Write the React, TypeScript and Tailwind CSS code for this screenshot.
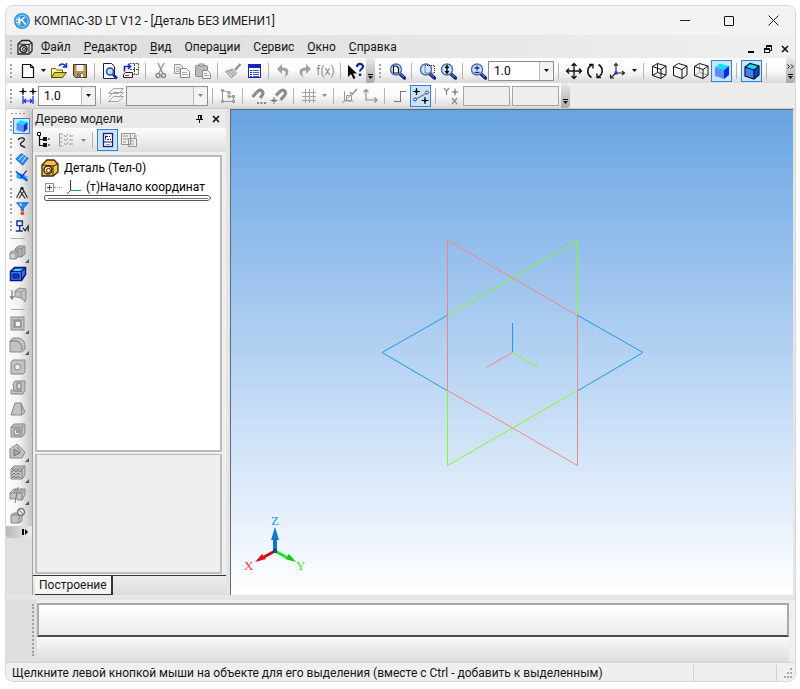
import React from 'react';
import clsx from 'clsx';

type IconProps = { children: React.ReactNode; crisp?: boolean };

const Icon = ({ children, crisp }: IconProps) => (
  <svg viewBox="0 0 18 18" className="h-[18px] w-[18px] shrink-0" fill="none" shapeRendering={crisp ? 'crispEdges' : undefined}>
    {children}
  </svg>
);

const Magnifier = ({ children }: { children?: React.ReactNode }) => (
  <Icon>
    <path d="M12 12l4.500 4" stroke="#16247e" strokeWidth="3.500" strokeLinecap="round" />
    <path d="M12 11.500l4 3.500" stroke="#6f8fe8" strokeWidth="1" />
    <circle cx="8" cy="7.500" r="5.500" fill="#cfe6fa" stroke="#4a68b8" strokeWidth="1.400" />
    {children}
  </Icon>
);

const WireCube = ({ hidden }: { hidden?: 'full' | 'thin' }) => (
  <Icon>
    {hidden && (
      <path
        d="M7.500 1.500v9l8.500 2.500M7.500 10.500l-5 3"
        stroke={hidden === 'full' ? '#222' : '#aaa'}
        strokeWidth="1"
      />
    )}
    <path d="M2.500 4.500l5-3 8.500 2.500v9l-5 3.500-8.500-3zM2.500 4.500l8.500 3 5-3.500M11 7.500v9" stroke="#111" />
  </Icon>
);

const SolidCube = ({ edges }: { edges?: boolean }) => (
  <Icon>
    <path d="M2 5l5-3.500 9 2.500-5 4z" fill="#00e5ff" />
    <path d="M2 5l9 3v9L2 14z" fill={edges ? '#3d86ea' : '#5c8cff'} />
    <path d="M11 8l5-4v9l-5 4z" fill={edges ? '#0a46c8' : '#0a2be0'} />
    {edges && <path d="M2 5l5-3.500 9 2.500v9l-5 4-9-3zM2 5l9 3 5-4M11 8v9" stroke="#0b1238" strokeWidth="1.200" />}
  </Icon>
);

const icons = {
  newDoc: (
    <Icon>
      <path d="M3.500 2.500h8l3 3v10h-11z" fill="#fff" stroke="#111" strokeWidth="1.200" />
      <path d="M11.500 2.500v3h3" stroke="#111" />
    </Icon>
  ),
  open: (
    <Icon>
      <path d="M1.500 15.500v-9h4l1 1.500h6v3" fill="#fff799" stroke="#6b6410" />
      <path d="M1.500 15.500l3-5h12l-4 5z" fill="#d9cc3c" stroke="#4f4a0a" />
      <path d="M9 4c2-3 5-2.500 6.500 0M16.500 1v4h-4" stroke="#1029d8" strokeWidth="1.500" />
    </Icon>
  ),
  save: (
    <Icon>
      <path d="M2.500 2.500h13v13h-11l-2-2z" fill="#b89652" stroke="#3a3428" />
      <path d="M5.500 3h7v6h-7z" fill="#f5f3ee" />
      <path d="M6 11.500h6.500v4H6z" fill="#777" />
      <path d="M10 12h2v3h-2z" fill="#fff" />
    </Icon>
  ),
  preview: (
    <Icon>
      <path d="M2.500 1.500h8l3 3v12h-11z" fill="#fff" stroke="#111a6e" />
      <circle cx="9" cy="9.500" r="3.500" fill="#bfe0fa" stroke="#2b4aa8" strokeWidth="1.500" />
      <path d="M12 12.500l4 4" stroke="#17257f" strokeWidth="2.500" />
    </Icon>
  ),
  layout: (
    <Icon>
      <path d="M7.500 1.500h9v11h-5M12.500 2v10M8 7.500h8" stroke="#444" strokeDasharray="2 1" />
      <path d="M1.500 12.500l2-2h7v5h-9z" fill="#fff" stroke="#222" />
      <path d="M3 13.500h4" stroke="#d02020" />
      <path d="M2.500 9.500V4.500h5M6 2l2.500 2.500L6 7" stroke="#1029d8" strokeWidth="1.600" />
    </Icon>
  ),
  cut: (
    <Icon>
      <path d="M6 1l4.500 10M12 1L7 11" stroke="#999" strokeWidth="1.500" />
      <circle cx="6" cy="13.500" r="2" stroke="#888" strokeWidth="1.400" />
      <circle cx="11.500" cy="13.500" r="2" stroke="#888" strokeWidth="1.400" />
    </Icon>
  ),
  copy: (
    <Icon>
      <path d="M1.500 2.500h6l2 2v7h-8z" fill="#eee" stroke="#999" />
      <path d="M7.500 6.500h6l3 3v6h-9z" fill="#f4f4f4" stroke="#888" />
      <path d="M3 5.500h4M3 7.500h4M3 9.500h4M9 10.500h5M9 12.500h6" stroke="#aaa" />
    </Icon>
  ),
  paste: (
    <Icon>
      <rect x="1.500" y="3.500" width="12" height="11" rx="1" fill="#bbb" stroke="#888" />
      <path d="M5 4V2h5v2z" fill="#ddd" stroke="#888" />
      <path d="M8.500 8.500h5l3 3v5h-8z" fill="#f4f4f4" stroke="#888" />
      <path d="M10 11.500h3M10 13.500h5" stroke="#aaa" />
    </Icon>
  ),
  brush: (
    <Icon>
      <path d="M16.500 2l-5.500 6" stroke="#8c8c8c" strokeWidth="2.200" />
      <path d="M1.500 9.500l7-2.500 4 4-5 5z" fill="#d4d4d4" stroke="#8c8c8c" />
      <path d="M4 9l5.500 5M6.500 8l4.500 4.500" stroke="#8c8c8c" />
    </Icon>
  ),
  props: (
    <Icon crisp>
      <rect x="3.500" y="2.500" width="12" height="13" fill="#fff" stroke="#1428b4" />
      <path d="M3 3h13v3H3z" fill="#1428b4" />
      <path d="M5 8h2M5 10h2M5 12h2M5 14h2" stroke="#1428b4" />
      <path d="M8 8h6M8 10h6M8 12h6M8 14h6" stroke="#3a56c8" />
    </Icon>
  ),
  undo: (
    <Icon>
      <path d="M7 2L2 7l5 5V8.500c4-.5 5 3 2 7 6-3 6.500-10-2-10z" fill="#a0a0a0" />
    </Icon>
  ),
  redo: (
    <Icon>
      <path d="M10 2l5 5-5 5V8.500c-4-.5-5 3-2 7-6-3-6.500-10 2-10z" fill="#a0a0a0" />
    </Icon>
  ),
  whatsThis: (
    <Icon>
      <path d="M1 3v12l3-3 2.500 5 2-1L6 11.500h4z" fill="#000" />
      <path d="M10 5c0-4 6-4 6-.5 0 2.500-3 2.500-3 5" stroke="#14268c" strokeWidth="2.200" />
      <path d="M11.800 11.500h2.500v2.500h-2.500z" fill="#14268c" />
    </Icon>
  ),
  zoomPage: (
    <Magnifier>
      <path d="M5.500 4h3l2 2v5h-5z" fill="#fff" stroke="#111" strokeWidth="1.200" />
    </Magnifier>
  ),
  zoomWindow: (
    <Magnifier>
      <path d="M7 3.500h9.500v7.500H7z" stroke="#222" strokeDasharray="1 1" />
    </Magnifier>
  ),
  zoomFit: (
    <Magnifier>
      <path d="M8 4v7" stroke="#111" strokeWidth="1.500" />
      <path d="M8 2.500l2.500 3.500h-5zM8 12.500L10.500 9h-5z" fill="#111" />
    </Magnifier>
  ),
  zoomIn: (
    <Magnifier>
      <path d="M8 3.500v5M5.500 6h5M5.500 10.500h5" stroke="#1b2d8d" strokeWidth="1.300" />
    </Magnifier>
  ),
  pan: (
    <Icon>
      <path d="M9 2v14M2 9h14M6.500 4L9 1.500 11.500 4M6.500 14L9 16.500l2.500-2.500M4 6.500L1.500 9 4 11.500M14 6.500L16.500 9 14 11.500" stroke="#111" strokeWidth="1.300" />
    </Icon>
  ),
  rotate: (
    <Icon>
      <path d="M5.500 15.500C0 12 1 5 6 3M12.500 2.500c5.500 3.500 4.500 10.500-.5 12.500" stroke="#111" strokeWidth="1.600" />
      <path d="M3 2.500h4v4M15 15.500h-4v-4" stroke="#111" strokeWidth="1.400" />
    </Icon>
  ),
  axes: (
    <Icon>
      <path d="M8 11V2M6 4l2-2.500L10 4M8 11h8M14 9l2.500 2-2.500 2M8 11l-5 4.500M2.500 12.500v3.500H6" stroke="#222" strokeWidth="1.100" />
      <path d="M6.500 9.500h3v3h-3z" fill="#1c32e8" />
    </Icon>
  ),
  step: (
    <Icon>
      <path d="M4 1v7M.5 4.500h7M14 1v7M10.500 4.500h7" stroke="#111" strokeWidth="1.100" />
      <path d="M4 2.500l2 2-2 2-2-2zM14 2.500l2 2-2 2-2-2z" fill="#111" />
      <path d="M4 9v8M14 9v8M5 14h8M7 12l-2 2 2 2M11 12l2 2-2 2" stroke="#1a30dc" strokeWidth="1.200" />
    </Icon>
  ),
  layers: (
    <Icon>
      <path d="M1.500 14.500l5-5h10l-5 5zM1.500 10.500l5-5h10l-5 5M1.500 6.500l5-5h10l-5 5z" fill="#f4f4f4" stroke="#a4a4a4" />
    </Icon>
  ),
  shape: (
    <Icon>
      <path d="M3.500 3.500v11h11v-5h-4.500v-4l-6-2" stroke="#9a9a9a" />
      <path d="M2 2h3v3H2zM2 13h3v3H2zM13 13h3v3h-3zM8.500 4h3v3h-3zM8.500 8h3v3h-3zM13 8h3v3h-3z" fill="#a2a2a2" />
    </Icon>
  ),
  magnetDots: (
    <Icon>
      <path d="M3.500 10L8 5c4-4 7.500 0 5 3.500L11 11" stroke="#8d8d8d" strokeWidth="3.200" />
      <path d="M8 15h2v2H8zM11.500 15h2v2h-2zM15 15h2v2h-2z" fill="#888" />
    </Icon>
  ),
  magnet: (
    <Icon>
      <path d="M6 8.500L9.500 5c4-4 8 0 5 3.500L10.500 13" stroke="#8d8d8d" strokeWidth="3.200" />
      <path d="M4 10v7M.5 13.500h7M2.500 12l3 3M5.500 12l-3 3" stroke="#777" />
    </Icon>
  ),
  grid: (
    <Icon crisp>
      <path d="M5 2v14M9 2v14M13 2v14M2 5h14M2 9h14M2 13h14" stroke="#a4a4a4" />
    </Icon>
  ),
  sketchCheck: (
    <Icon>
      <path d="M4.500 4v10h9M2 16l8-7M6.500 8.500h5v5h-5z" stroke="#999" />
      <path d="M10 5l2 2.500L17 2" stroke="#888" strokeWidth="1.400" />
    </Icon>
  ),
  localAxes: (
    <Icon>
      <path d="M5 3v10h11M2.500 5L5 2.500 7.500 5M13.500 10.500L16 13l-2.500 2.500" stroke="#8c8c8c" strokeWidth="1.200" />
    </Icon>
  ),
  ortho: (
    <Icon crisp>
      <path d="M3 14h6V4h6" stroke="#777" />
    </Icon>
  ),
  snap: (
    <Icon>
      <path d="M3 12.500L15 6" stroke="#777" strokeWidth="1.200" />
      <path d="M4.500 1v7M1 4.500h7M13 10v7M9.500 13.500h7" stroke="#111" strokeWidth="1.200" />
      <path d="M4.500 2.500l2 2-2 2-2-2zM13 11.500l2 2-2 2-2-2z" fill="#111" />
      <circle cx="3" cy="12.500" r="1.500" fill="#fff" stroke="#2233dd" />
      <circle cx="15" cy="5.500" r="1.500" fill="#fff" stroke="#2233dd" />
    </Icon>
  ),
  coords: (
    <Icon>
      <path d="M2 1l2.500 3L7 1M4.500 4v4M10 11l5 6M15 11l-5 6M13 1.500v7M9.500 5h7" stroke="#888" strokeWidth="1.200" />
      <path d="M13 3l2 2-2 2-2-2z" fill="#888" />
    </Icon>
  ),
};

type Caption = { label: string; active?: boolean; wide?: boolean; children: React.ReactNode };

const ToolButton = ({ label, active, wide, children }: Caption) => (
  <button
    type="button"
    aria-label={label}
    className={clsx(
      'flex h-[22px] shrink-0 items-center justify-center border',
      wide ? 'w-6' : 'w-[21px]',
      active ? 'border-[#2b86d9] bg-[#cce4f8]' : 'border-transparent',
    )}
  >
    {children}
  </button>
);

const Separator = () => (
  <div className="flex w-[9px] shrink-0 justify-center">
    <div className="h-4 w-px bg-[#b4b4b4]" />
  </div>
);

const Caret = ({ dim }: { dim?: boolean }) => (
  <svg viewBox="0 0 5 3" className="h-[3px] w-[5px]">
    <path d="M0 0h5L2.500 3z" fill={dim ? '#888' : '#111'} />
  </svg>
);

const MenuArrow = ({ label, dim }: { label: string; dim?: boolean }) => (
  <button type="button" aria-label={label} className="flex h-[22px] w-[10px] shrink-0 items-center justify-center">
    <Caret dim={dim} />
  </button>
);

const Grip = () => (
  <div className="mr-1 flex w-[5px] shrink-0 flex-col items-center gap-[2px]">
    {[0, 1, 2, 3].map((i) => (
      <span key={i} className="h-[2px] w-[2px] bg-[#a3a3a3]" />
    ))}
  </div>
);

const Overflow = ({ label, more }: { label: string; more?: boolean }) => (
  <button
    type="button"
    aria-label={label}
    className="flex w-[9px] shrink-0 flex-col items-center justify-end gap-px self-stretch rounded-r-sm bg-gradient-to-b from-[#e9e9e9] to-[#a9a9a9] pb-1"
  >
    {more && (
      <svg viewBox="0 0 7 5" className="mb-1 h-[5px] w-[7px]" fill="none">
        <path d="M.5.5l2 2-2 2M4 .5l2 2-2 2" stroke="#111" />
      </svg>
    )}
    <span className="h-px w-[5px] bg-black" />
    <Caret />
  </button>
);

type ComboProps = { label: string; value: string; width: string; disabled?: boolean };

const Combo = ({ label, value, width, disabled }: ComboProps) => (
  <div className={clsx('relative h-5 shrink-0 border border-[#8e8e8e]', width, disabled ? 'bg-[#ededed]' : 'bg-white')}>
    <select
      aria-label={label}
      disabled={disabled}
      className="block h-full w-full appearance-none bg-transparent px-[5px] text-xs leading-[18px] text-black outline-none"
    >
      <option>{value}</option>
    </select>
    <span className="pointer-events-none absolute inset-y-0 right-0 flex w-[14px] items-center justify-center border-l border-[#b9b9b9] bg-[#f3f3f3]">
      <Caret dim={disabled} />
    </span>
  </div>
);

const menus: [string, string, string][] = [
  ['', 'Ф', 'айл'],
  ['', 'Р', 'едактор'],
  ['', 'В', 'ид'],
  ['Опера', 'ц', 'ии'],
  ['С', 'е', 'рвис'],
  ['', 'О', 'кно'],
  ['', 'С', 'правка'],
];

const TitleBar = () => (
  <header className="flex h-[29px] shrink-0 items-center bg-[#f3f3f3] pl-2">
    <svg viewBox="0 0 16 16" className="mr-1 h-4 w-4" fill="none">
      <circle cx="8" cy="8" r="8" fill="#2e96dc" />
      <circle cx="8" cy="8" r="6" stroke="#9fd2f6" />
      <path d="M5.500 4v8M6 8l5-4M8 7l3.500 4.500M3 6l3 2-3 2" stroke="#fff" strokeWidth="1.500" />
    </svg>
    <h1 className="flex-1 whitespace-nowrap text-xs text-[#1b1b1b]">КОМПАС-3D LT V12 - [Деталь БЕЗ ИМЕНИ1]</h1>
    <button type="button" aria-label="Свернуть" className="flex h-full w-11 items-center justify-center">
      <span className="h-px w-[10px] bg-[#222]" />
    </button>
    <button type="button" aria-label="Развернуть" className="flex h-full w-11 items-center justify-center">
      <span className="h-[10px] w-[10px] rounded-[1px] border border-[#111]" />
    </button>
    <button type="button" aria-label="Закрыть" className="flex h-full w-11 items-center justify-center">
      <svg viewBox="0 0 11 11" className="h-[11px] w-[11px]">
        <path d="M.5.5l10 10M10.500.5l-10 10" stroke="#222" />
      </svg>
    </button>
  </header>
);

const MenuBar = () => (
  <nav className="flex h-[23px] shrink-0 items-center bg-gradient-to-r from-[#dcdcdc] to-[#efefef] pl-[2px]">
    <Grip />
    <svg viewBox="0 0 16 16" className="mr-2 h-4 w-4" fill="#ddd" stroke="#222">
      <path d="M1 5l4-3.500h7L15 4v8l-3 3H1z" strokeWidth="1.300" />
      <path d="M1 5l11 .5V15M12 5.500L15 4" />
      <circle cx="6.500" cy="10" r="3.500" strokeWidth="1.500" />
      <circle cx="7" cy="10" r="1.500" />
    </svg>
    <ul className="flex flex-1 gap-[13px] text-xs text-[#151515]">
      {menus.map(([before, key, after]) => (
        <li key={before + key + after}>
          <button type="button">
            {before}
            <span className="underline underline-offset-2">{key}</span>
            {after}
          </button>
        </li>
      ))}
    </ul>
    <div className="flex items-center gap-[9px] pr-[6px] pt-1">
      <button type="button" aria-label="Свернуть документ" className="flex h-2 items-end">
        <span className="h-[2px] w-[6px] bg-black" />
      </button>
      <button type="button" aria-label="Восстановить документ">
        <svg viewBox="0 0 9 9" className="h-[9px] w-[9px]" fill="none" stroke="#111" shapeRendering="crispEdges">
          <path d="M3 4V1h5v5H6M3 2h5M1 4h5v4H1zM1 5h5" />
        </svg>
      </button>
      <button type="button" aria-label="Закрыть документ">
        <svg viewBox="0 0 8 8" className="h-2 w-2">
          <path d="M1 1l6 6M7 1L1 7" stroke="#111" strokeWidth="1.600" />
        </svg>
      </button>
    </div>
  </nav>
);

const barStyle = 'flex items-center rounded-l-sm bg-gradient-to-b from-white via-[#fafafa] to-[#d9d9d9] pl-[2px]';

const StandardBar = () => (
  <div className="flex h-[25px] shrink-0 bg-[#ececec]">
    <div className={barStyle}>
      <Grip />
      <ToolButton label="Создать">{icons.newDoc}</ToolButton>
      <MenuArrow label="Создать документ" />
      <ToolButton label="Открыть">{icons.open}</ToolButton>
      <ToolButton label="Сохранить">{icons.save}</ToolButton>
      <Separator />
      <ToolButton label="Предварительный просмотр">{icons.preview}</ToolButton>
      <ToolButton label="Компоновка">{icons.layout}</ToolButton>
      <Separator />
      <ToolButton label="Вырезать">{icons.cut}</ToolButton>
      <ToolButton label="Копировать">{icons.copy}</ToolButton>
      <ToolButton label="Вставить">{icons.paste}</ToolButton>
      <Separator />
      <ToolButton label="Копировать свойства">{icons.brush}</ToolButton>
      <ToolButton label="Свойства">{icons.props}</ToolButton>
      <Separator />
      <ToolButton label="Отменить">{icons.undo}</ToolButton>
      <ToolButton label="Повторить">{icons.redo}</ToolButton>
      <ToolButton label="Переменные">
        <span className="text-xs text-[#8b8b8b]">f(x)</span>
      </ToolButton>
      <Separator />
      <ToolButton label="Что это такое?">{icons.whatsThis}</ToolButton>
      <Overflow label="Ещё кнопки" />
    </div>
    <div className={clsx(barStyle, 'flex-1')}>
      <Grip />
      <ToolButton label="Показать все">{icons.zoomPage}</ToolButton>
      <Separator />
      <ToolButton label="Увеличить рамкой">{icons.zoomWindow}</ToolButton>
      <ToolButton label="Масштаб по высоте">{icons.zoomFit}</ToolButton>
      <Separator />
      <ToolButton label="Приблизить">{icons.zoomIn}</ToolButton>
      <Combo label="Масштаб" value="1.0" width="w-[66px]" />
      <Separator />
      <ToolButton label="Сдвинуть">{icons.pan}</ToolButton>
      <ToolButton label="Повернуть">{icons.rotate}</ToolButton>
      <ToolButton label="Ориентация" wide>{icons.axes}</ToolButton>
      <MenuArrow label="Выбор ориентации" />
      <Separator />
      <ToolButton label="Каркас">
        <WireCube hidden="full" />
      </ToolButton>
      <ToolButton label="Без невидимых линий">
        <WireCube />
      </ToolButton>
      <ToolButton label="Невидимые линии тонкие">
        <WireCube hidden="thin" />
      </ToolButton>
      <ToolButton label="Полутоновое" active>
        <SolidCube />
      </ToolButton>
      <Separator />
      <ToolButton label="Полутоновое с каркасом" active>
        <SolidCube edges />
      </ToolButton>
      <Separator />
      <div className="flex-1" />
      <Overflow label="Ещё виды" more />
    </div>
  </div>
);

const StateBar = () => (
  <div className="flex h-[26px] shrink-0 border-b border-[#c9c9c9] bg-[#ececec]">
    <div className={barStyle}>
      <Grip />
      <ToolButton label="Шаг курсора">{icons.step}</ToolButton>
      <Combo label="Текущий шаг" value="1.0" width="w-[58px]" />
      <Separator />
      <ToolButton label="Слои">{icons.layers}</ToolButton>
      <Combo label="Слой" value="" width="w-[82px]" disabled />
      <Separator />
      <ToolButton label="Эскиз">{icons.shape}</ToolButton>
      <Separator />
      <ToolButton label="Настройка привязок">{icons.magnetDots}</ToolButton>
      <ToolButton label="Привязки">{icons.magnet}</ToolButton>
      <Separator />
      <ToolButton label="Сетка">{icons.grid}</ToolButton>
      <MenuArrow label="Параметры сетки" dim />
      <Separator />
      <ToolButton label="Проверка эскиза">{icons.sketchCheck}</ToolButton>
      <ToolButton label="Система координат">{icons.localAxes}</ToolButton>
      <Separator />
      <ToolButton label="Ортогональное черчение">{icons.ortho}</ToolButton>
      <ToolButton label="Округление" active>{icons.snap}</ToolButton>
      <Separator />
      <ToolButton label="Координаты курсора">{icons.coords}</ToolButton>
      <div className="flex gap-[2px] px-[2px]">
        <input aria-label="Координата X" disabled className="h-5 w-[47px] border border-[#a6a6a6] bg-[#eee]" />
        <input aria-label="Координата Y" disabled className="h-5 w-[47px] border border-[#a6a6a6] bg-[#eee]" />
      </div>
      <Overflow label="Ещё параметры" />
    </div>
  </div>
);

const sets: { label: string; art: React.ReactNode; active?: boolean }[] = [
  { label: 'Редактирование детали', art: <SolidCube />, active: true },
  {
    label: 'Пространственные кривые',
    art: <path d="M4 5c2-4 9-3 8 0-1 3-6 3-5 6s5 2 6 4" stroke="#222" strokeWidth="1.800" />,
  },
  {
    label: 'Поверхности',
    art: (
      <>
        <path d="M1 9l7-7 9 6-7 9z" fill="#2a8cf0" stroke="#1453c8" />
        <path d="M5 10l6-6M9 13l5-7" stroke="#8fe0ff" strokeWidth="1.500" />
      </>
    ),
  },
  {
    label: 'Вспомогательная геометрия',
    art: (
      <>
        <path d="M2 5l7 1 7 4v7l-7-4-7-1z" fill="#23b2fa" />
        <path d="M1 3l15 12M15 2L7 12" stroke="#1a2bd8" strokeWidth="1.600" />
      </>
    ),
  },
  {
    label: 'Измерения',
    art: (
      <>
        <path d="M8.500 3L2 15M9.500 3L16 15M7 7l6 9M11 7l-6 9" stroke="#222" strokeWidth="1.400" />
        <circle cx="9" cy="3" r="2" fill="#222" />
      </>
    ),
  },
  {
    label: 'Фильтры',
    art: (
      <>
        <path d="M2 1h15l-6 7v3H8V8z" fill="#1d8cf0" stroke="#1050b8" />
        <path d="M5 2h4l-1 4z" fill="#a7f0ff" />
        <circle cx="9.500" cy="14.500" r="2.500" fill="#f04a1c" />
      </>
    ),
  },
  {
    label: 'Спецификация',
    art: (
      <>
        <path d="M2.500 2.500h7v6h-7zM6 8.500v7M1 15.500h9" stroke="#1a2b9c" strokeWidth="1.800" />
        <path d="M10 11l3 4 4-6v7" stroke="#222" strokeWidth="1.500" />
      </>
    ),
  },
];

const gray = { fill: '#c2c2c2', stroke: '#878787' };

const Block = () => <path d="M2 5l3-3h11v9l-3 4H2zM2 5h11v10M13 5l3-3" {...gray} />;

const sketchOps = [
  {
    label: 'Выдавливание',
    more: true,
    art: (
      <>
        <path d="M6 5l3-3h7v8l-3 3H6zM6 5h7v8M13 5l3-3" fill="#b4b4b4" stroke="#878787" />
        <path d="M1 9l2-2h6v5l-2 3H1zM1 9h6v6M7 9l2-2" fill="#cfcfcf" stroke="#878787" />
      </>
    ),
  },
  {
    label: 'Деталь-заготовка',
    art: (
      <>
        <path d="M1.500 6.500l4-4h11v7l-4 6h-11z" fill="#2f7df0" stroke="#0b147c" strokeWidth="1.500" />
        <path d="M1.500 6.500h11l4-4M12.500 6.500v9" stroke="#0b147c" strokeWidth="1.200" />
        <path d="M4 9h6v4H4z" fill="#1a2fd0" stroke="#0b147c" />
        <path d="M6 4h7l-2 2H5z" fill="#30e0ff" />
      </>
    ),
  },
  {
    label: 'Листовое тело',
    art: (
      <>
        <path d="M3 4v8M1 10l2 3 2-3" stroke="#777" strokeWidth="1.200" />
        <path d="M6 5l4-3 7 1v9l-1 4c-2-4-6-5-10-5z" {...gray} />
        <path d="M6 5l6 1 5-3M12 6v6" stroke="#9a9a9a" />
      </>
    ),
  },
];

const featureOps = [
  { label: 'Вырезать', more: true, art: <><rect x="2" y="2" width="13" height="13" {...gray} /><rect x="5" y="5" width="7" height="7" fill="#a2a2a2" stroke="#808080" /><path d="M7 7h4v4H7z" fill="#f4f4f4" /></> },
  { label: 'Скругление', more: true, art: <><path d="M1 5l3-3h6c4 1 6 4 6 8v3l-3 3H1z" {...gray} /><path d="M1 5h6c4 1 6 4 6 9" stroke="#777" /></> },
  { label: 'Отверстие', art: <><path d="M2 4l2-2h12v12l-2 2H2z" {...gray} /><circle cx="8.500" cy="9" r="3" fill="#eee" stroke="#808080" /></> },
  { label: 'Ребро жесткости', art: <><path d="M4 5l2-3h10v9l-2 4H2v-4h3z" {...gray} /><path d="M8 4h4v6H8zM5 12h8" fill="#ddd" stroke="#777" /></> },
  { label: 'Уклон', art: <path d="M2 15L6 3h6l4 9-3 3zM12 3l1 12" {...gray} /> },
  { label: 'Оболочка', art: <><Block /><path d="M5 7h6v6H5z" fill="#e4e4e4" stroke="#777" /><path d="M7 8h4v3H7z" fill="#999" /></> },
  { label: 'Сечение', more: true, art: <><path d="M1 6l7-5 8 8-3 6H1z" {...gray} /><path d="M5 6v7l6-3zM8 4l4 5" fill="#a8a8a8" stroke="#777" /></> },
  { label: 'Массив', more: true, art: <><Block /><path d="M3 8l2-2 2 2 2-2 2 2 2-2M3 11l2-2 2 2 2-2 2 2M3 14l2-2 2 2 2-2 2 2" stroke="#777" /></> },
  { label: 'Зеркальный массив', more: true, art: <><path d="M1 7l4-4h11v6l-3 5H9l-2-2-2 1H1zM1 7h12v7M13 7l3-4" {...gray} /><path d="M9 1L6 17M5 7l2-4M10 7l3-4" stroke="#777" /></> },
  { label: 'Исключить', art: <><path d="M2 8l3-2h8v8l-3 2H2zM2 8h8v8" {...gray} /><circle cx="12" cy="5" r="3.500" fill="#e8e8e8" stroke="#777" strokeWidth="1.500" /><path d="M9.500 2.500l5 5" stroke="#777" /></> },
];

type OpProps = { label: string; more?: boolean; art: React.ReactNode };

const OpButton = ({ label, more, art }: OpProps) => (
  <button type="button" aria-label={label} className="relative flex h-5 w-5 items-center justify-center">
    <Icon>{art}</Icon>
    {more && (
      <svg viewBox="0 0 4 4" className="absolute -right-px bottom-0 h-1 w-1">
        <path d="M4 0v4H0z" fill="#555" />
      </svg>
    )}
  </button>
);

const Rule = () => <div className="my-1 h-px w-[14px] shrink-0 bg-[#aaa]" />;

const CompactPanel = () => (
  <aside className="flex w-[26px] shrink-0 flex-col bg-[#e0e0e0]">
    <div className="flex flex-col items-center rounded-t bg-gradient-to-r from-white via-[#f3f3f3] to-[#c4c4c4] pr-[2px] pt-1">
      <div className="mb-1 flex gap-[2px]">
        {[0, 1, 2, 3].map((i) => (
          <span key={i} className="h-px w-[2px] bg-[#999]" />
        ))}
      </div>
      <div className="flex h-[116px] w-full flex-col justify-between">
        {sets.map((set) => (
          <div key={set.label} className="flex items-center gap-px pl-1">
            <span className="h-[10px] w-[2px] border-l-2 border-dotted border-[#a3a3a3]" />
            <button
              type="button"
              aria-label={set.label}
              className={clsx(
                'flex h-4 w-[17px] items-center justify-center border',
                set.active ? 'border-[#2b86d9] bg-[#cce4f8]' : 'border-transparent',
              )}
            >
              <svg viewBox="0 0 18 18" className="h-[14px] w-[14px] shrink-0" fill="none">
                {set.art}
              </svg>
            </button>
          </div>
        ))}
      </div>
      <Rule />
      <div className="flex h-[62px] flex-col justify-between">
        {sketchOps.map((op) => (
          <OpButton key={op.label} {...op} />
        ))}
      </div>
      <Rule />
      <div className="flex h-[212px] flex-col justify-between">
        {featureOps.map((op) => (
          <OpButton key={op.label} {...op} />
        ))}
      </div>
    </div>
    <button
      type="button"
      aria-label="Развернуть панель"
      className="flex h-3 items-center justify-end rounded-b bg-gradient-to-r from-[#b9b9b9] to-[#ececec] pr-1"
    >
      <svg viewBox="0 0 6 6" className="h-[6px] w-[6px]">
        <path d="M0 0h2v6H0zM3 0l3 3-3 3z" fill="#000" />
      </svg>
    </button>
  </aside>
);

const ModelTree = () => (
  <section className="flex w-[194px] shrink-0 flex-col border-l border-[#a0a0a0] bg-[#efefef]">
    <div className="flex h-[19px] items-center bg-[#eaeaea] pl-[2px] pr-[6px]">
      <h2 className="flex-1 text-xs text-[#1b1b1b]">Дерево модели</h2>
      <button type="button" aria-label="Закрепить" className="mr-[9px]">
        <svg viewBox="0 0 7 9" className="h-[9px] w-[7px]" fill="none" stroke="#111" shapeRendering="crispEdges">
          <path d="M2 5V1h3v4M4.500 1v4M0 5.500h7M3.500 6v3" />
        </svg>
      </button>
      <button type="button" aria-label="Закрыть дерево">
        <svg viewBox="0 0 8 8" className="h-2 w-2">
          <path d="M1 1l6 6M7 1L1 7" stroke="#111" strokeWidth="1.600" />
        </svg>
      </button>
    </div>
    <div className="flex h-6 items-center bg-gradient-to-b from-[#fdfdfd] to-[#dedede]">
      <ToolButton label="Структура">
        <Icon>
          <path d="M4.500 4v10.500h4M4.500 8.500h4" stroke="#111" strokeWidth="1.200" />
          <path d="M2.500 1.500h3v3h-3z" stroke="#111" />
          <path d="M8 6h4v4H8zM8 12h4v4H8z" fill="#111" />
          <path d="M13 8h2M13 14h2" stroke="#4a5a2c" strokeWidth="1.500" />
        </Icon>
      </ToolButton>
      <ToolButton label="Состав" wide>
        <Icon>
          <path d="M2.500 3v12h3M2.500 7h3M2.500 11h3M7 4l1.500 2L11 3M7 8l1.500 2L11 7M7 12l1.500 2 2.500-3M12 5h4M12 9h4M12 13h4M2 3h4" stroke="#999" />
        </Icon>
      </ToolButton>
      <MenuArrow label="Выбор состава" dim />
      <Separator />
      <ToolButton label="Отображение" active>
        <Icon>
          <rect x="4.500" y="2.500" width="9" height="13" fill="#fff" stroke="#151c84" strokeWidth="1.300" />
          <path d="M5 11h8M6.500 4.500v4M7 5.500h2M8 8.500h2M10 5.500h1M11 8.500h1" stroke="#151c84" />
          <path d="M7 13.500h4" stroke="#8f97d8" />
        </Icon>
      </ToolButton>
      <ToolButton label="Дополнительное окно">
        <Icon>
          <path d="M1.500 2.500h9v11h-9zM3 5h5M3 8h5M3 11h3M8.500 7.500h8v8h-8zM10 10h4M10 13h4M11 2.500h4v3M13 4.500l2 2 2-2" fill="#eee" stroke="#909090" />
        </Icon>
      </ToolButton>
    </div>
    <div className="ml-[2px] mr-1 mt-[3px] h-[297px] shrink-0 border-2 border-[#bcbcbc] bg-white pl-[3px] text-xs text-black">
      <div className="flex h-[22px] items-center gap-[5px] pl-px">
        <svg viewBox="0 0 18 18" className="h-[18px] w-[18px]" fill="#f5c04c" stroke="#3a2606">
          <path d="M1 6l5-5h7l4 4v8l-5 4H1z" strokeWidth="1.300" />
          <path d="M1 6l11 1v10M12 7l5-2" />
          <circle cx="7" cy="11" r="4" fill="#ffe08a" strokeWidth="1.500" />
          <circle cx="7.500" cy="11.500" r="2" fill="#fff3c8" />
        </svg>
        <span>Деталь (Тел-0)</span>
      </div>
      <div className="flex h-4 items-center pl-[5px]">
        <button type="button" aria-label="Раскрыть" className="relative h-[9px] w-[9px] border border-[#919191] bg-white">
          <span className="absolute left-px top-[3px] h-px w-[5px] bg-[#334a9c]" />
          <span className="absolute left-[3px] top-px h-[5px] w-px bg-[#334a9c]" />
        </button>
        <span className="w-2 border-t border-dotted border-[#999]" />
        <svg viewBox="0 0 18 16" className="ml-1 h-4 w-[18px]" fill="none">
          <path d="M4.500 1v11" stroke="#1c2ee0" />
          <path d="M4 11.500h11" stroke="#1a9c50" />
          <path d="M4.500 11.500l-3.500 3.500" stroke="#e02424" />
        </svg>
        <span className="ml-[2px] whitespace-nowrap">(т)Начало координат</span>
      </div>
      <svg viewBox="0 0 168 6" className="ml-1 h-[6px] w-[168px]" fill="#fff" stroke="#555">
        <path d="M2 .5h162l3 2.500-3 2.500H2Q.5 5.500.5 3T2 .5z" />
        <path d="M4 3.500h160" stroke="#777" />
      </svg>
    </div>
    <div className="ml-[2px] mr-1 mt-[2px] flex-1 border-2 border-t border-[#bcbcbc] bg-[#efefef]" />
    <div className="mt-px flex h-5 items-start border-t border-[#333] bg-gradient-to-b from-[#ededed] to-[#dcdcdc]">
      <button type="button" className="ml-[2px] h-[19px] border-b border-r-2 border-[#333] bg-[#f6f6f6] px-1 text-xs text-[#151515]">
        Построение
      </button>
    </div>
  </section>
);

const Viewport = () => (
  <main className="relative flex flex-1 items-center justify-center border-l border-t border-[#5f6b78] bg-gradient-to-b from-[#68a4e2] to-white">
    <svg viewBox="0 0 260 226" className="h-[226px] w-[260px] overflow-visible" fill="none">
      <path d="M65 75.500L0 112.500l65 38M196 75.500l65 37-65 38" stroke="#1e96ff" />
      <path d="M195.500.5l-130 75M65.500 225.500l130-75" stroke="#84fc1c" />
      <path d="M65.500.5l130 75M65.500 150.500l130 75" stroke="#f48484" />
      <path d="M195 0h1v75h-1zM65 151h1v75h-1z" fill="#84fc1c" />
      <path d="M65 0h1v151h-1zM195 75h1v151h-1z" fill="#f48484" />
      <path d="M130 83h1v29h-1z" fill="#1e96ff" />
      <path d="M130.500 112.500l26 15" stroke="#84fc1c" />
      <path d="M130.500 112.500l-26 15" stroke="#f48484" />
    </svg>
    <svg viewBox="0 0 64 60" className="absolute bottom-[21px] left-3 h-[60px] w-16 font-['Liberation_Serif',serif] text-[13px]">
      <path d="M32 37V24" stroke="#1478d0" strokeWidth="4" />
      <path d="M32 13l-4 13h8z" fill="#1478d0" />
      <path d="M32 37l-11 6" stroke="#c41414" strokeWidth="3" />
      <path d="M12 48l7-8 4 5z" fill="#e01414" />
      <path d="M32 37l11 6" stroke="#18e818" strokeWidth="3" />
      <path d="M53 48l-7-8-4 5z" fill="#14c814" />
      <path d="M30 35h4v4h-4z" fill="#0f4c8c" />
      <text x="28" y="11" fill="#1e96ff">Z</text>
      <text x="1" y="56" fill="#f03c3c">X</text>
      <text x="53" y="56" fill="#1cf01c">Y</text>
    </svg>
  </main>
);

const PropertyPanel = () => (
  <section className="mt-[5px] flex h-[62px] shrink-0 bg-gradient-to-r from-[#dfdfdf] to-[#efefef] pl-[26px] pr-[6px]">
    <div className="mr-[3px] mt-1 h-[52px] w-[2px] border-l-2 border-dotted border-[#a0a0a0]" />
    <div className="flex flex-1 flex-col bg-gradient-to-b from-[#efefef] to-[#dadada] pt-[3px]">
      <div className="h-[34px] border-2 border-[#a9a9a9] border-b-[#4a4a4a] bg-gradient-to-b from-white to-[#ebebeb]" />
      <div className="flex-1 bg-gradient-to-b from-[#fafafa] to-[#dcdcdc]" />
    </div>
  </section>
);

const StatusBar = () => (
  <footer className="flex h-[19px] shrink-0 items-center border-t border-[#d4d4d4] bg-[#efefef] pl-[6px] pt-px text-xs text-[#151515]">
    <p className="flex-1 whitespace-nowrap">
      Щелкните левой кнопкой мыши на объекте для его выделения (вместе с Ctrl - добавить к выделенным)
    </p>
    <div className="h-4 w-[84px] border-x border-[#d0d0d0]" />
    <svg viewBox="0 0 10 10" className="ml-[6px] mr-[2px] h-[10px] w-[10px]" fill="#aaa">
      <path d="M7 0h2v2H7zM4 4h2v2H4zM7 4h2v2H7zM1 8h2v2H1zM4 8h2v2H4zM7 8h2v2H7z" />
    </svg>
  </footer>
);

const App = () => (
  <div className="flex min-h-screen flex-col bg-white pb-[7px] pl-[5px] pr-1 pt-[5px] font-['Roboto','Open_Sans',sans-serif]">
    <div className="flex flex-1 flex-col overflow-hidden rounded-lg border border-[#d8d8d8] bg-[#e6e6e6]">
      <TitleBar />
      <MenuBar />
      <StandardBar />
      <StateBar />
      <div className="flex flex-1 pr-[2px]">
        <CompactPanel />
        <ModelTree />
        <div className="w-1 shrink-0 bg-[#e4e4e4]" />
        <Viewport />
      </div>
      <PropertyPanel />
      <StatusBar />
    </div>
  </div>
);

export default App;
